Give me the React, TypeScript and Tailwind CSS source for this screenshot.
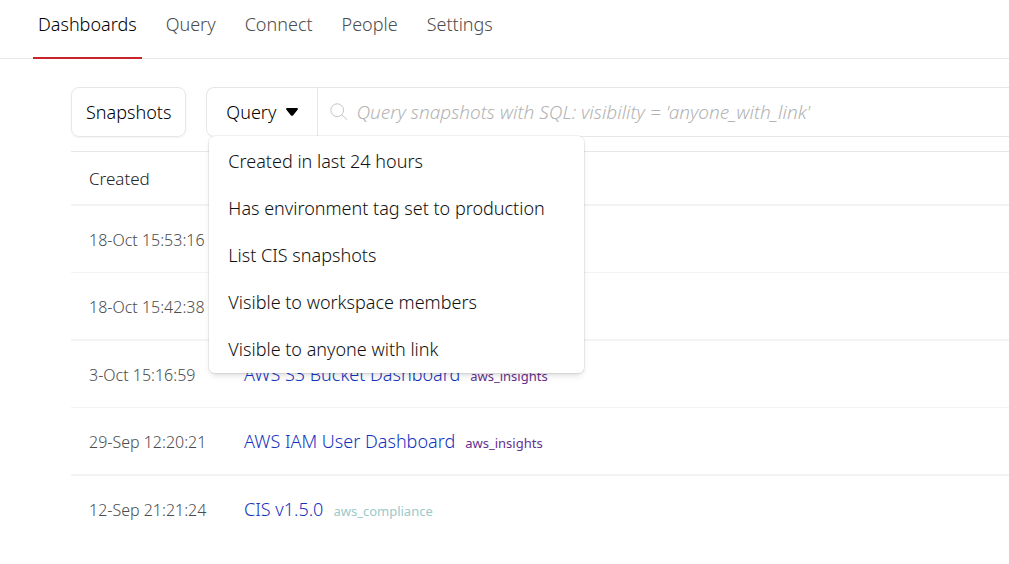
import { useState } from "react";

interface Snapshot {
  created: string;
  title: string;
  mod: string;
  modClass: string;
}

const TABS = ["Dashboards", "Query", "Connect", "People", "Settings"];

const PRESETS = [
  { label: "Created in last 24 hours", sql: "created_at > now() - interval '24 hours'" },
  { label: "Has environment tag set to production", sql: "tags ->> 'environment' = 'production'" },
  { label: "List CIS snapshots", sql: "dashboard_title like 'CIS%'" },
  { label: "Visible to workspace members", sql: "visibility = 'workspace'" },
  { label: "Visible to anyone with link", sql: "visibility = 'anyone_with_link'" },
];

const SNAPSHOTS: Snapshot[] = [
  { created: "18-Oct 15:53:16", title: "", mod: "", modClass: "" },
  { created: "18-Oct 15:42:38", title: "", mod: "", modClass: "" },
  { created: "3-Oct 15:16:59", title: "AWS S3 Bucket Dashboard", mod: "aws_insights", modClass: "text-[#65318e]" },
  { created: "29-Sep 12:20:21", title: "AWS IAM User Dashboard", mod: "aws_insights", modClass: "text-[#65318e]" },
  { created: "12-Sep 21:21:24", title: "CIS v1.5.0", mod: "aws_compliance", modClass: "text-[#9acaca]" },
];

function SearchIcon() {
  return (
    <svg viewBox="0 0 18 18" className="size-[18px] shrink-0 text-[#c4c4c4]" fill="none" stroke="currentColor" aria-hidden="true">
      <circle cx="7.2" cy="7.2" r="6.4" />
      <path d="M11.9 11.9 17 16.6" strokeLinecap="round" />
    </svg>
  );
}

function CaretIcon() {
  return (
    <svg viewBox="0 0 12 8" className="h-2 w-3" fill="currentColor" aria-hidden="true">
      <path d="M1.2 0h9.6c1 0 1.5 1.1.8 1.8L7 7.4c-.5.6-1.5.6-2 0L.4 1.8C-.3 1.1.2 0 1.2 0Z" />
    </svg>
  );
}

export default function App() {
  const [activeTab, setActiveTab] = useState("Dashboards");
  const [menuOpen, setMenuOpen] = useState(true);
  const [query, setQuery] = useState("");

  const applyPreset = (sql: string) => {
    setQuery(sql);
    setMenuOpen(false);
  };

  return (
    <div className="overflow-hidden bg-white font-['Noto_Sans',sans-serif] text-lg font-light text-black">
      <nav className="flex h-[59px] gap-[19px] border-b border-[#e8e8e8] pl-[33px]">
        {TABS.map((tab) => (
          <a
            key={tab}
            href="#"
            onClick={() => setActiveTab(tab)}
            className={`h-[59px] border-b-2 px-[5px] pt-2.5 ${
              activeTab === tab ? "border-[#c7252b] text-black" : "border-transparent text-[#4c4c4c]"
            }`}
          >
            {tab}
          </a>
        ))}
      </nav>

      <main className="pt-7 pl-[71px]">
        <div className="flex h-[50px] gap-5">
          <button className="rounded-lg border border-[#e5e7eb] px-3.5 shadow-xs">Snapshots</button>

          <div className="relative flex flex-1 rounded-l-lg border border-r-0 border-[#e5e7eb]">
            <button
              aria-haspopup="menu"
              aria-expanded={menuOpen}
              onClick={() => setMenuOpen(!menuOpen)}
              className="flex items-center gap-2.5 border-r border-[#e5e7eb] px-[19px]"
            >
              Query
              <CaretIcon />
            </button>
            <label className="flex flex-1 items-center gap-2 pl-3">
              <SearchIcon />
              <input
                type="text"
                aria-label="Query snapshots"
                value={query}
                onChange={(e) => setQuery(e.target.value)}
                placeholder="Query snapshots with SQL: visibility = 'anyone_with_link'"
                className="h-full flex-1 text-[19px] outline-none placeholder:text-[#b4b4b4] placeholder:italic"
              />
            </label>

            {menuOpen && (
              <div
                role="menu"
                className="absolute top-full left-0.5 z-10 w-[375px] rounded-md bg-white py-px shadow-md ring-1 ring-black/5"
              >
                {PRESETS.map((p) => (
                  <button
                    key={p.label}
                    role="menuitem"
                    onClick={() => applyPreset(p.sql)}
                    className="block h-[47px] w-full px-[19px] text-left text-[#111] hover:bg-gray-50"
                  >
                    {p.label}
                  </button>
                ))}
              </div>
            )}
          </div>
        </div>

        <table className="mt-3.5 w-full border-separate border-spacing-0 border-t border-[#e5e7eb] text-left">
          <thead>
            <tr>
              <th className="h-[54px] w-[155px] border-b-2 border-[#f3f3f3] pt-0.5 pl-[18px] text-[17px] font-light text-[#222]">
                Created
              </th>
              <th className="border-b-2 border-[#f3f3f3]" />
            </tr>
          </thead>
          <tbody className="[&>tr:last-child>td]:border-b-transparent [&>tr:nth-child(even)>td]:h-[68px] [&>tr:nth-child(even)>td]:border-b-2">
            {SNAPSHOTS.map((s) => (
              <tr key={s.created}>
                <td className="h-[67px] border-b border-[#f3f3f3] pt-0.5 pl-[18px] text-base whitespace-nowrap text-[#4c4c4c]">
                  {s.created}
                </td>
                <td className="h-[67px] border-b border-[#f3f3f3] pl-[18px] whitespace-nowrap">
                  {s.title && (
                    <a href="#" className="text-[#1233c0]">
                      {s.title}
                    </a>
                  )}
                  {s.mod && <span className={`ml-2.5 text-[13px] font-normal ${s.modClass}`}>{s.mod}</span>}
                </td>
              </tr>
            ))}
          </tbody>
        </table>
      </main>
    </div>
  );
}
